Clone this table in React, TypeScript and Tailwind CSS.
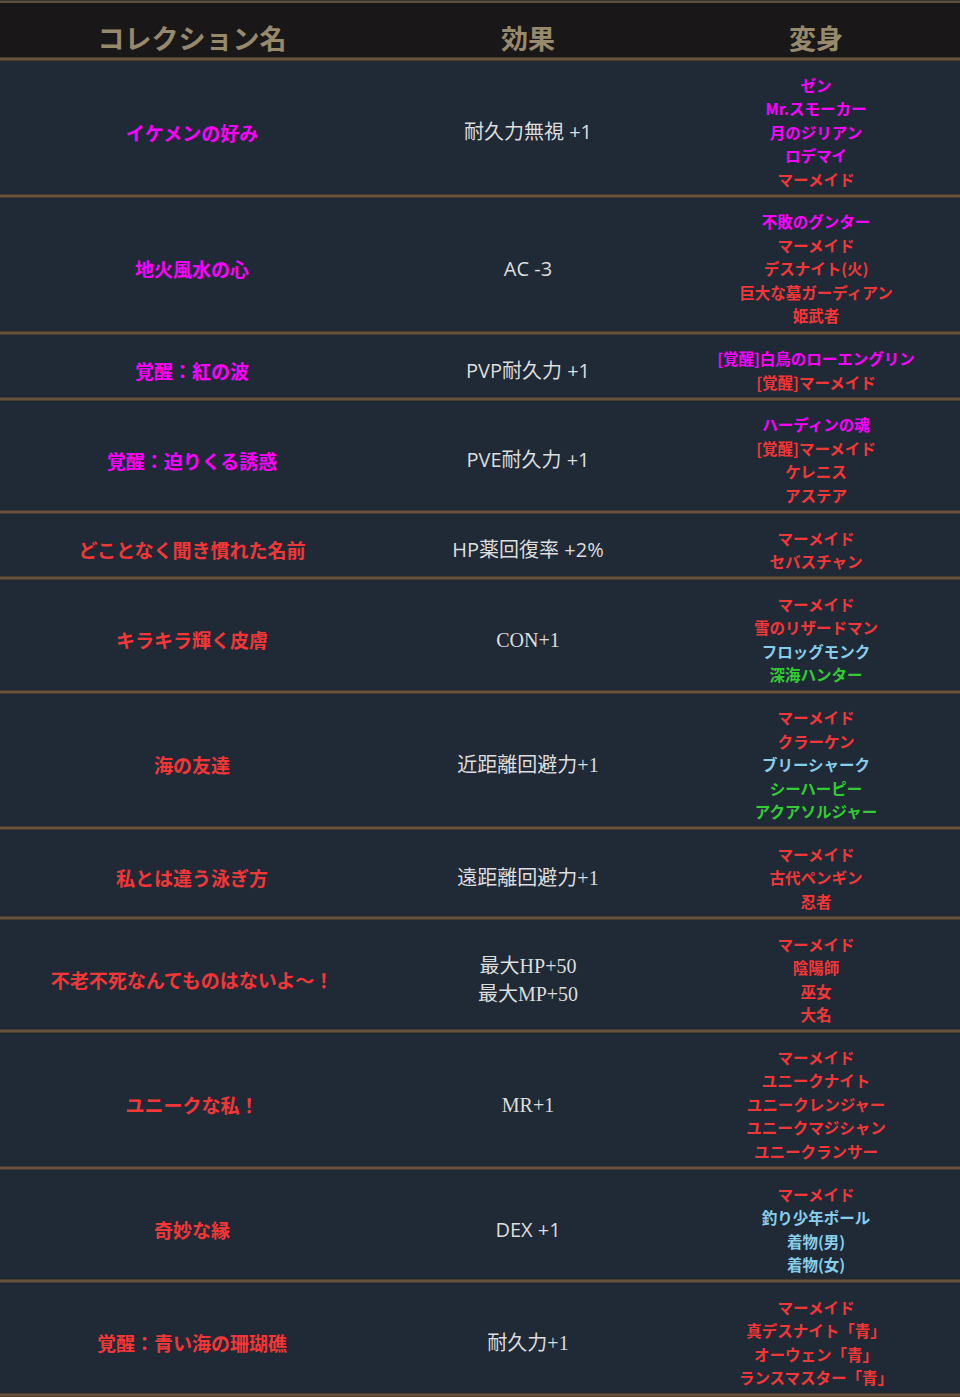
import React from 'react';

type Tone = 'm' | 'r' | 'b' | 'g';

interface Row {
  name: string;
  tone: Tone;
  effect: string[];
  serif?: boolean;
  forms: Array<[string, Tone]>;
}

const toneClass: Record<Tone, string> = {
  m: 'text-[#ff00ff]',
  r: 'text-[#f53636]',
  b: 'text-[#87ceeb]',
  g: 'text-[#32cd32]',
};

const rows: Row[] = [
  {
    name: 'イケメンの好み',
    tone: 'm',
    effect: ['耐久力無視 +1'],
    forms: [['ゼン', 'm'], ['Mr.スモーカー', 'm'], ['月のジリアン', 'm'], ['ロデマイ', 'm'], ['マーメイド', 'r']],
  },
  {
    name: '地火風水の心',
    tone: 'm',
    effect: ['AC -3'],
    forms: [['不敗のグンター', 'm'], ['マーメイド', 'r'], ['デスナイト(火)', 'r'], ['巨大な墓ガーディアン', 'r'], ['姫武者', 'r']],
  },
  {
    name: '覚醒：紅の波',
    tone: 'm',
    effect: ['PVP耐久力 +1'],
    forms: [['[覚醒]白鳥のローエングリン', 'm'], ['[覚醒]マーメイド', 'r']],
  },
  {
    name: '覚醒：迫りくる誘惑',
    tone: 'm',
    effect: ['PVE耐久力 +1'],
    forms: [['ハーディンの魂', 'm'], ['[覚醒]マーメイド', 'r'], ['ケレニス', 'r'], ['アステア', 'r']],
  },
  {
    name: 'どことなく聞き慣れた名前',
    tone: 'r',
    effect: ['HP薬回復率 +2%'],
    forms: [['マーメイド', 'r'], ['セバスチャン', 'r']],
  },
  {
    name: 'キラキラ輝く皮膚',
    tone: 'r',
    effect: ['CON+1'],
    serif: true,
    forms: [['マーメイド', 'r'], ['雪のリザードマン', 'r'], ['フロッグモンク', 'b'], ['深海ハンター', 'g']],
  },
  {
    name: '海の友達',
    tone: 'r',
    effect: ['近距離回避力+1'],
    serif: true,
    forms: [['マーメイド', 'r'], ['クラーケン', 'r'], ['ブリーシャーク', 'b'], ['シーハーピー', 'g'], ['アクアソルジャー', 'g']],
  },
  {
    name: '私とは違う泳ぎ方',
    tone: 'r',
    effect: ['遠距離回避力+1'],
    serif: true,
    forms: [['マーメイド', 'r'], ['古代ペンギン', 'r'], ['忍者', 'r']],
  },
  {
    name: '不老不死なんてものはないよ～！',
    tone: 'r',
    effect: ['最大HP+50', '最大MP+50'],
    serif: true,
    forms: [['マーメイド', 'r'], ['陰陽師', 'r'], ['巫女', 'r'], ['大名', 'r']],
  },
  {
    name: 'ユニークな私！',
    tone: 'r',
    effect: ['MR+1'],
    serif: true,
    forms: [['マーメイド', 'r'], ['ユニークナイト', 'r'], ['ユニークレンジャー', 'r'], ['ユニークマジシャン', 'r'], ['ユニークランサー', 'r']],
  },
  {
    name: '奇妙な縁',
    tone: 'r',
    effect: ['DEX +1'],
    forms: [['マーメイド', 'r'], ['釣り少年ポール', 'b'], ['着物(男)', 'b'], ['着物(女)', 'b']],
  },
  {
    name: '覚醒：青い海の珊瑚礁',
    tone: 'r',
    effect: ['耐久力+1'],
    serif: true,
    forms: [['マーメイド', 'r'], ['真デスナイト「青」', 'r'], ['オーウェン「青」', 'r'], ['ランスマスター「青」', 'r']],
  },
];

function Divider() {
  return <div className="h-[4px] border-y border-[#4a3d30] bg-[#665441]" />;
}

export default function App() {
  return (
    <div className="w-[960px] bg-[#202a37] font-['Noto_Sans_CJK_JP',sans-serif]">
      {/* Header */}
      <div className="h-px bg-[#3a3633]" />
      <div className="h-[2px] bg-[#5e4e3d]" />
      <div className="grid h-[54px] grid-cols-[384px_288px_288px] items-center bg-[#191717] pt-[14px] text-[27px] font-bold leading-none text-[#978a6c]">
        <div className="text-center">コレクション名</div>
        <div className="text-center">効果</div>
        <div className="text-center">変身</div>
      </div>
      <Divider />

      {/* Rows */}
      {rows.map((row) => (
        <div key={row.name}>
          <div className="grid grid-cols-[384px_288px_288px] items-center pt-[12.5px] pb-[2.75px]">
            <div className={`text-center text-[19px] font-bold leading-[23.5px] ${toneClass[row.tone]}`}>
              {row.name}
            </div>
            <div
              className={`text-center text-[20px] leading-[28px] text-[#dddddd] ${
                row.serif
                  ? "font-['Liberation_Serif','Noto_Sans_CJK_JP',serif]"
                  : "font-['Open_Sans','Noto_Sans_CJK_JP',sans-serif]"
              }`}
            >
              {row.effect.map((e) => (
                <div key={e}>{e}</div>
              ))}
            </div>
            <div className="text-center text-[15.5px] font-bold leading-[23.5px]">
              {row.forms.map(([label, tone], i) => (
                <div key={i} className={toneClass[tone]}>
                  {label}
                </div>
              ))}
            </div>
          </div>
          <Divider />
        </div>
      ))}
    </div>
  );
}
